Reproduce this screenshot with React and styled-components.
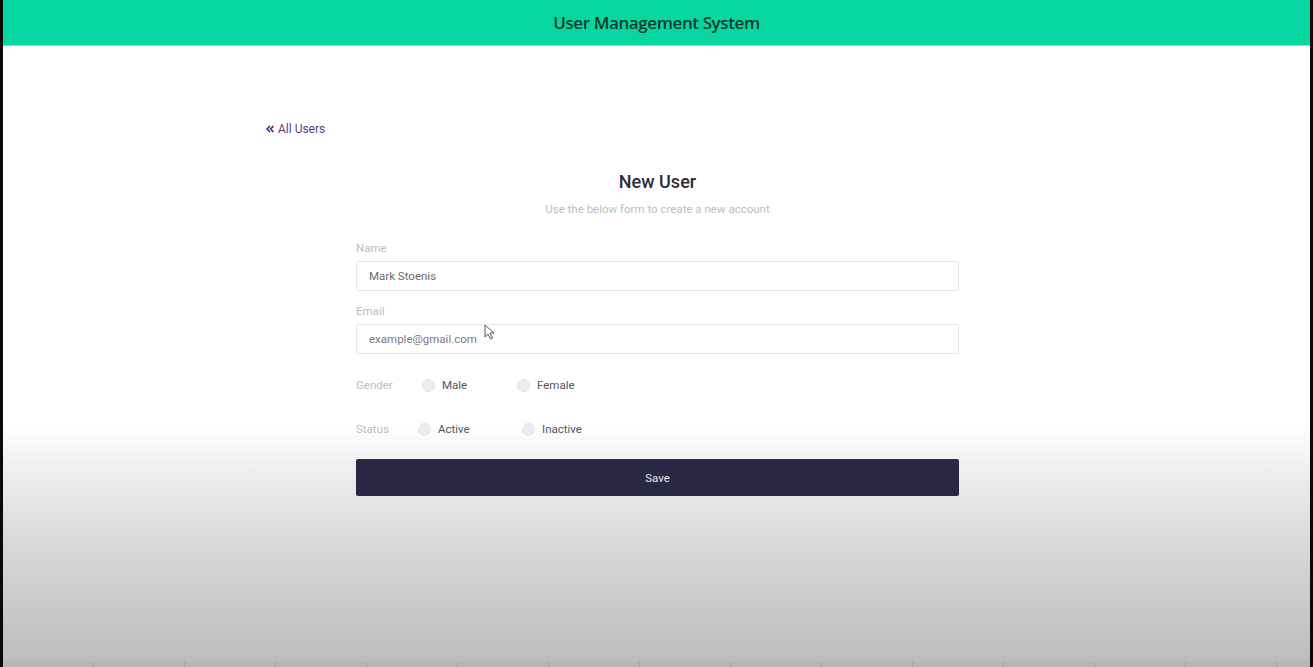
import React from "react";
import styled, { createGlobalStyle } from "styled-components";
import { ChevronsLeft } from "lucide-react";

const Global = createGlobalStyle`
  html, body { margin: 0; padding: 0; height: 100%; }
  body { font-family: Roboto, "Noto Sans", "Liberation Sans", sans-serif; background: #000; }
  #root { height: 100%; }
  * { box-sizing: border-box; }
`;

const Frame = styled.div`
  height: 667px;
  width: 1313px;
  border-left: 3px solid #0a0a0a;
  border-right: 3px solid #0a0a0a;
  display: flex;
  flex-direction: column;
  background: linear-gradient(
    to bottom,
    #ffffff 0px,
    #ffffff 425px,
    #eeeeee 470px,
    #dcdcdc 530px,
    #cbcbcb 600px,
    #bdbdbd 660px
  );
  position: relative;
  overflow: hidden;
`;

const Header = styled.header`
  height: 46px;
  background: #06d6a0;
  border-bottom: 1px solid #7fe9cc;
  display: flex;
  align-items: center;
  justify-content: center;
`;

const Title = styled.h1`
  margin: 0;
  font-family: "Open Sans", "Noto Sans", sans-serif;
  font-weight: 600;
  font-size: 17px;
  letter-spacing: -0.4px;
  color: #113a31;
`;

const Main = styled.main`
  flex: 1;
  width: 783px;
  margin: 0 auto;
  padding-top: 76px;
  display: flex;
  flex-direction: column;
`;

const BackLink = styled.a`
  display: inline-flex;
  align-items: center;
  gap: 2px;
  align-self: flex-start;
  font-size: 12px;
  line-height: 14px;
  color: #5a3c86;
  text-decoration: none;
  margin-left: -1px;
`;

const Form = styled.form`
  width: 603px;
  margin: 36px 0 0 91px;
  display: flex;
  flex-direction: column;
`;

const FormTitle = styled.h2`
  margin: 0;
  text-align: center;
  font-size: 18px;
  line-height: 20px;
  font-weight: 500;
  color: #2c2c38;
`;

const Subtitle = styled.p`
  margin: 10px 0 0;
  text-align: center;
  font-size: 11.5px;
  line-height: 14px;
  color: #bdbdc2;
`;

const Label = styled.label`
  display: block;
  font-size: 11.5px;
  line-height: 14px;
  color: #bcbcc0;
  margin-top: ${(p) => p.$mt}px;
`;

const Input = styled.input`
  display: block;
  width: 100%;
  height: 30px;
  margin-top: 6px;
  border: 1px solid #e6e6e8;
  border-radius: 2px;
  padding: 0 12px;
  font-family: inherit;
  font-size: 11.5px;
  color: #6a6a70;
  background: #fff;
  outline: none;
  &::placeholder { color: #7a7a80; }
`;

const FieldWrap = styled.div`
  position: relative;
`;

const Cursor = styled.svg`
  position: absolute;
  left: 128px;
  top: 6px;
`;

const RadioRow = styled.div`
  display: flex;
  align-items: center;
  height: 16px;
  margin-top: ${(p) => p.$mt}px;
`;

const RowLabel = styled.span`
  width: ${(p) => p.$w}px;
  font-size: 11.5px;
  color: #bcbcc0;
`;

const Option = styled.label`
  display: inline-flex;
  align-items: center;
  gap: 7px;
  width: ${(p) => p.$w}px;
  font-size: 11.5px;
  color: #55555c;
`;

const Dot = styled.span`
  width: 13px;
  height: 13px;
  border-radius: 50%;
  background: #ececee;
  border: 1px solid #e4e4e6;
  display: inline-block;
`;

const SaveButton = styled.button`
  margin-top: 22px;
  height: 37px;
  width: 100%;
  border: none;
  border-radius: 2px;
  background: #2a2744;
  color: #e8e8ee;
  font-family: inherit;
  font-size: 11.5px;
  cursor: pointer;
`;

const BottomStrip = styled.div`
  height: 6px;
  background: repeating-linear-gradient(
    to right,
    #b6b6b6 0px,
    #b6b6b6 90px,
    #a8a8a8 90px,
    #a8a8a8 91px
  );
`;

export default function App() {
  return (
    <>
      <Global />
      <Frame>
        <Header>
          <Title>User Management System</Title>
        </Header>
        <Main>
          <BackLink href="#">
            <ChevronsLeft size={12} strokeWidth={3.5} color="#4a2a7a" />
            All Users
          </BackLink>
          <Form onSubmit={(e) => e.preventDefault()}>
            <FormTitle>New User</FormTitle>
            <Subtitle>Use the below form to create a new account</Subtitle>
            <Label $mt={25}>Name</Label>
            <Input defaultValue="Mark Stoenis" />
            <Label $mt={13}>Email</Label>
            <FieldWrap>
              <Input placeholder="example@gmail.com" />
              <Cursor width="11" height="16" viewBox="0 0 11 16">
                <path
                  d="M1 1 L1 13 L4 10 L6.5 15 L8.5 14 L6 9 L10 9 Z"
                  fill="#fff"
                  stroke="#444"
                  strokeWidth="0.9"
                  strokeLinejoin="round"
                />
              </Cursor>
            </FieldWrap>
            <RadioRow $mt={23}>
              <RowLabel $w={66}>Gender</RowLabel>
              <Option $w={95}>
                <Dot />
                Male
              </Option>
              <Option $w={100}>
                <Dot />
                Female
              </Option>
            </RadioRow>
            <RadioRow $mt={28}>
              <RowLabel $w={62}>Status</RowLabel>
              <Option $w={104}>
                <Dot />
                Active
              </Option>
              <Option $w={100}>
                <Dot />
                Inactive
              </Option>
            </RadioRow>
            <SaveButton type="submit">Save</SaveButton>
          </Form>
        </Main>
        <BottomStrip />
      </Frame>
    </>
  );
}
